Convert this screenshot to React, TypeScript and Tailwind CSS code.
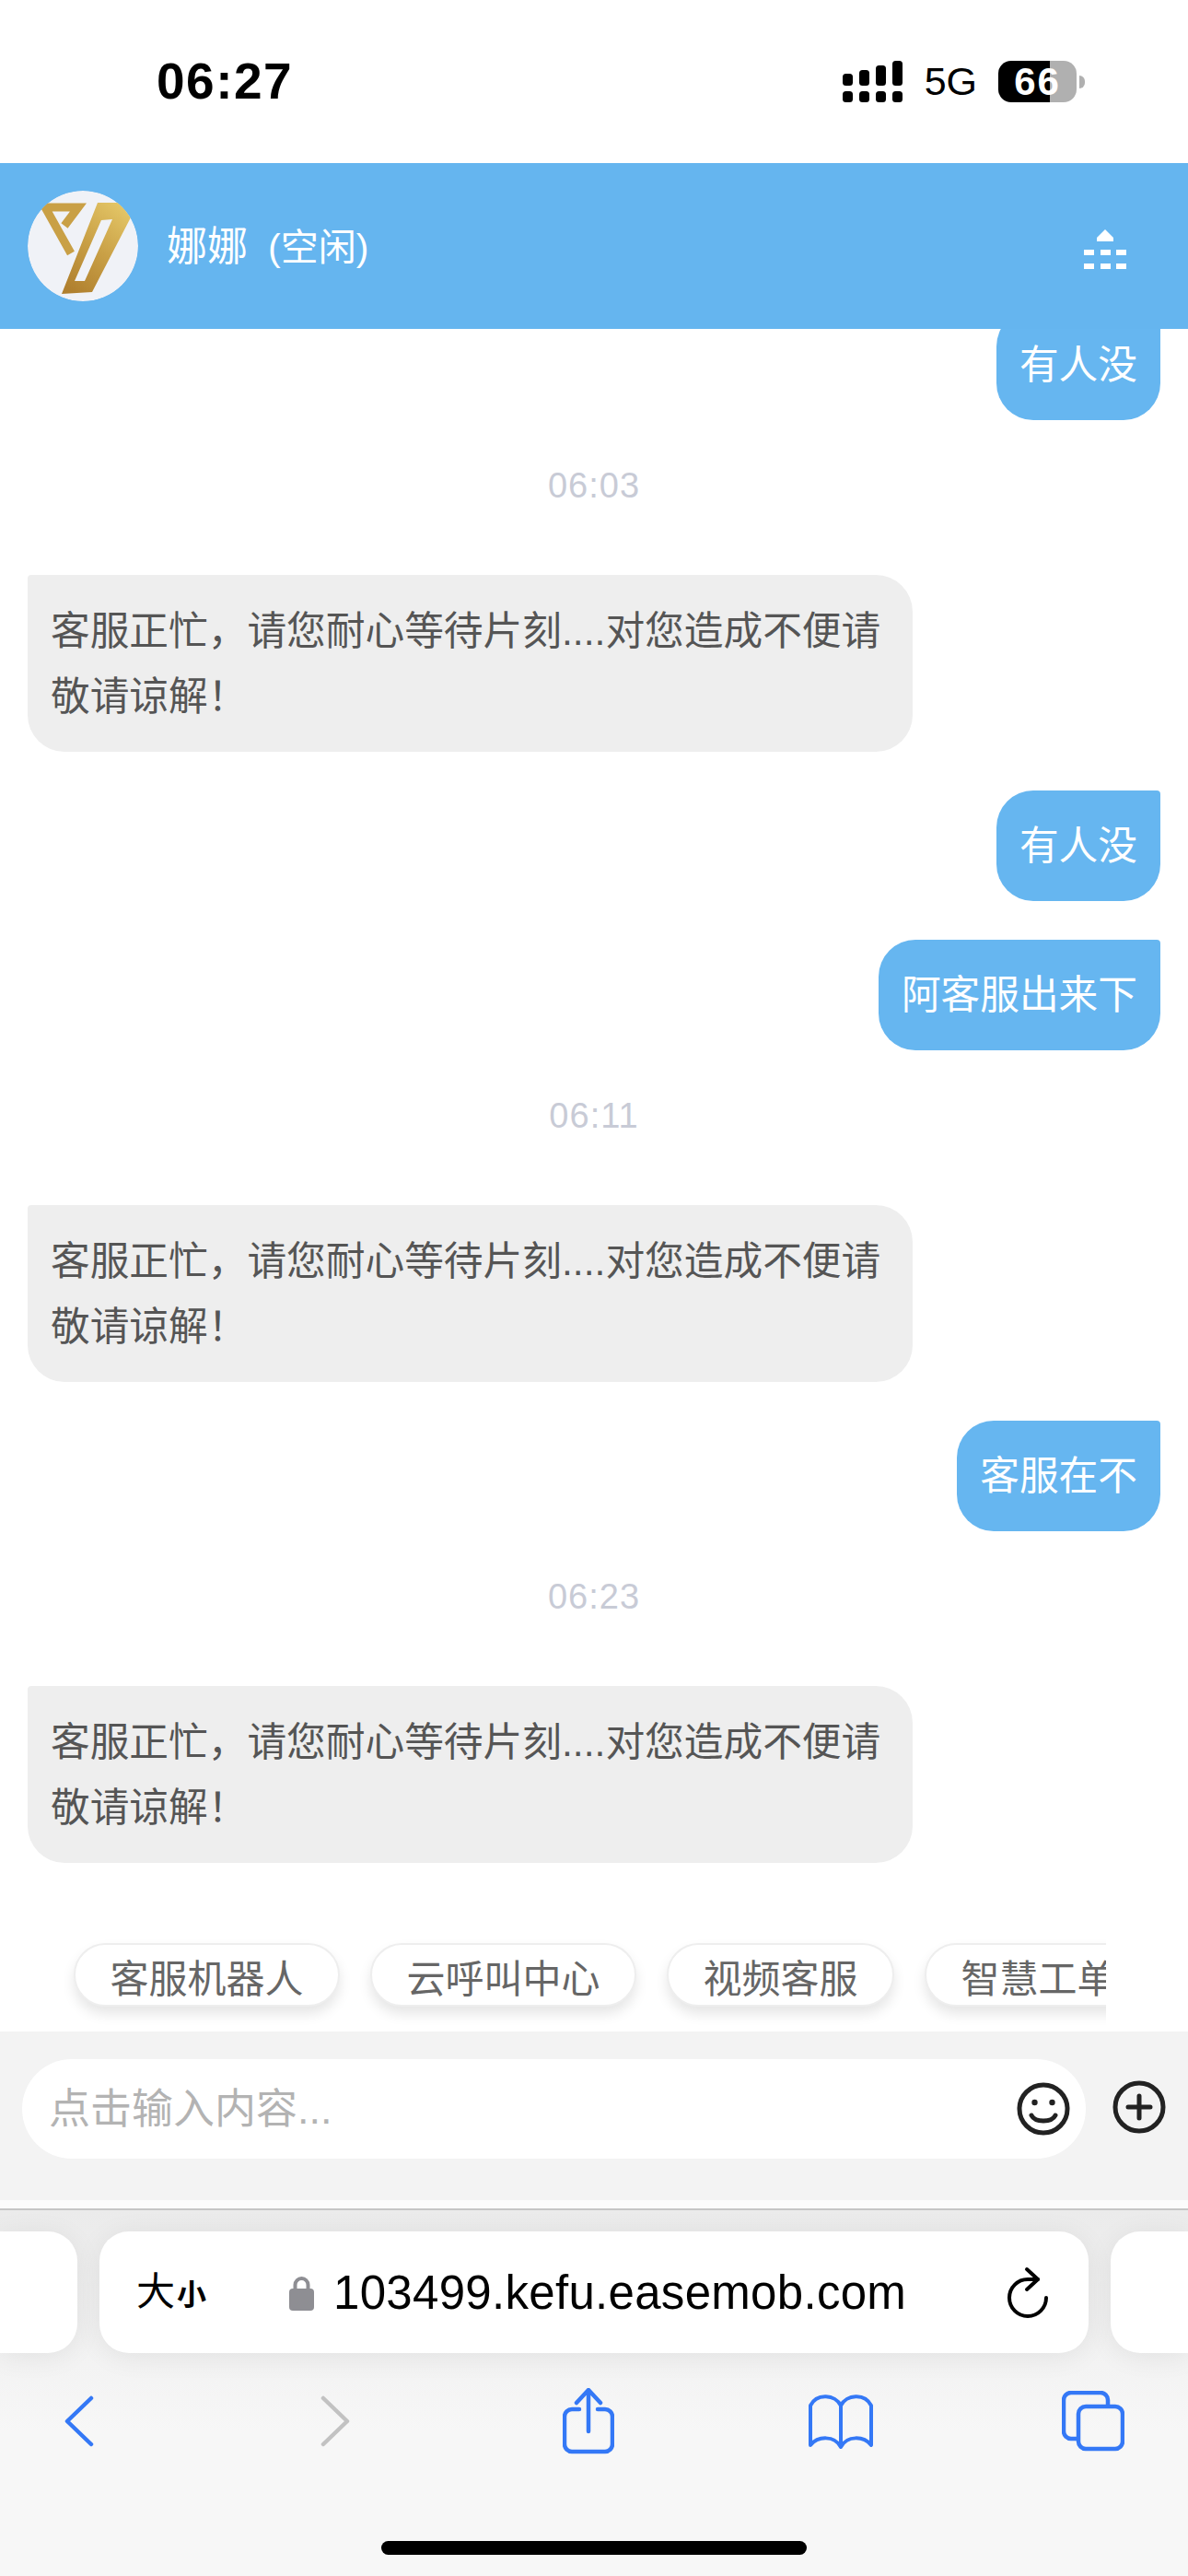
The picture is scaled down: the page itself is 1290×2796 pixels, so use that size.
import React from 'react';

const FONT = 'font-["Liberation_Sans","Noto_Sans_CJK_SC",sans-serif]';

type Message =
  | { kind: 'time'; text: string }
  | { kind: 'busy' }
  | { kind: 'mine'; text: string };

const messages: Message[] = [
  { kind: 'mine', text: '有人没' },
  { kind: 'time', text: '06:03' },
  { kind: 'busy' },
  { kind: 'mine', text: '有人没' },
  { kind: 'mine', text: '阿客服出来下' },
  { kind: 'time', text: '06:11' },
  { kind: 'busy' },
  { kind: 'mine', text: '客服在不' },
  { kind: 'time', text: '06:23' },
  { kind: 'busy' },
];

const chips = ['客服机器人', '云呼叫中心', '视频客服', '智慧工单'];

function SignalIcon() {
  return (
    <svg width="65" height="45" viewBox="0 0 65 45" fill="#000">
      <rect x="0" y="14" width="11" height="13" rx="3.5" />
      <rect x="18" y="10" width="11" height="17" rx="3.5" />
      <rect x="36" y="5" width="11" height="22" rx="3.5" />
      <rect x="54" y="0" width="11" height="27" rx="3.5" />
      <rect x="0" y="33" width="11" height="12" rx="3.5" />
      <rect x="18" y="33" width="11" height="12" rx="3.5" />
      <rect x="36" y="33" width="11" height="12" rx="3.5" />
      <rect x="54" y="33" width="11" height="12" rx="3.5" />
    </svg>
  );
}

function StatusBar() {
  return (
    <div className="h-[177px] flex items-center pl-[170px] pr-[112px] bg-white">
      <span className="text-[55px] leading-none font-bold text-black tracking-[1.5px]">06:27</span>
      <div className="ml-auto flex items-center">
        <SignalIcon />
        <span className="ml-[24px] text-[43px] leading-none text-black">5G</span>
        <div className="ml-[23px] w-[85px] h-[45px] rounded-[14px] flex items-center justify-center bg-[linear-gradient(90deg,#000_66%,#b0b0b0_66%)]">
          <span className="text-[42px] leading-none font-bold text-white tracking-[2px]">66</span>
        </div>
        <div className="ml-[3px] w-[6px] h-[14px] rounded-r-full bg-[#b0b0b0]" />
      </div>
    </div>
  );
}

function LogoMark() {
  return (
    <svg width="120" height="120" viewBox="0 0 120 120" className="block">
      <defs>
        <linearGradient id="gold" x1="0.8" y1="0" x2="0.2" y2="1">
          <stop offset="0" stopColor="#e3c566" />
          <stop offset="0.5" stopColor="#c9a046" />
          <stop offset="1" stopColor="#b0802f" />
        </linearGradient>
      </defs>
      <circle cx="60" cy="60" r="60" fill="#f0f2f7" />
      <path
        d="M76 13 H100 L112 29 L70 110 L37 112 Z M80 32 L92 31 L62 98 L51 98 Z"
        fill="url(#gold)"
        fillRule="evenodd"
      />
      <polyline points="40,38 55,18 19,18 47,68" fill="none" stroke="#c9a046" strokeWidth="9" />
    </svg>
  );
}

function MenuIcon() {
  return (
    <svg width="46" height="43" viewBox="0 0 46 43" fill="#fff" className="mt-[6px]">
      <polygon points="23,0 32,9 32,13 14,13 14,9" />
      <rect x="0" y="22" width="11" height="6" />
      <rect x="18" y="22" width="11" height="6" />
      <rect x="35" y="22" width="11" height="6" />
      <rect x="0" y="37" width="11" height="6" />
      <rect x="18" y="37" width="11" height="6" />
      <rect x="35" y="37" width="11" height="6" />
    </svg>
  );
}

function Header() {
  return (
    <div className="h-[180px] flex items-center pl-[30px] pr-[67px] bg-[#65b5ef] relative z-10">
      <div className="w-[120px] h-[120px] rounded-full overflow-hidden">
        <LogoMark />
      </div>
      <div className="ml-[31px] pt-[2px] text-white leading-none">
        <span className="text-[44px]">娜娜</span>
        <span className="text-[41px] ml-[22px]">(空闲)</span>
      </div>
      <div className="ml-auto">
        <MenuIcon />
      </div>
    </div>
  );
}

function BusyBubble() {
  return (
    <div className="w-[961px] pl-[25px] pr-[25px] pt-[26px] pb-[24px] self-start rounded-[40px] rounded-tl-[4px] bg-[#eeeeee] text-[42.7px] leading-[71px] text-[#555555]">
      客服正忙，请您耐心等待片刻....对您造成不便请敬请谅解！
    </div>
  );
}

function MessageList() {
  return (
    <div className="flex-1 min-h-0 flex flex-col gap-[42px] pl-[30px] pr-[30px] -mt-[21px]">
      {messages.map((m, i) => {
        if (m.kind === 'time') {
          return (
            <div key={i} className="h-[56px] mb-[28px] pt-[3px] flex items-center justify-center text-[38px] tracking-[1px] text-[#c8cbd6]">
              {m.text}
            </div>
          );
        }
        if (m.kind === 'busy') return <BusyBubble key={i} />;
        return (
          <div key={i} className="h-[120px] px-[25px] pt-[1px] self-end flex items-center rounded-[40px] rounded-tr-[4px] bg-[#66b6f0] text-[42.7px] text-white">
            {m.text}
          </div>
        );
      })}
    </div>
  );
}

function ChipRow() {
  return (
    <div className="ml-[60px] w-[1141px] h-[115px] pl-[20px] pt-[19px] flex gap-[33px] overflow-hidden">
      {chips.map(c => (
        <div
          key={c}
          className="h-[69px] flex-none pl-[37.5px] pr-[37.5px] pt-[10px] flex items-center rounded-full bg-white border-2 border-[#eeeeee] text-[42px] text-[#666666] shadow-[0_8px_14px_rgba(0,0,0,0.1)]"
        >
          {c}
        </div>
      ))}
    </div>
  );
}

function SmileIcon() {
  return (
    <svg width="58" height="58" viewBox="0 0 58 58" fill="none" stroke="#222" strokeWidth="5" strokeLinecap="round">
      <circle cx="29" cy="29" r="26" />
      <circle cx="19.5" cy="22" r="3.2" fill="#222" stroke="none" />
      <circle cx="38.5" cy="22" r="3.2" fill="#222" stroke="none" />
      <path d="M16 36 C20 44 38 44 42 36" />
    </svg>
  );
}

function PlusIcon() {
  return (
    <svg width="58" height="58" viewBox="0 0 58 58" fill="none" stroke="#222" strokeWidth="5" strokeLinecap="round">
      <circle cx="29" cy="29" r="26" />
      <path d="M29 17 V41 M17 29 H41" />
    </svg>
  );
}

function InputBar() {
  return (
    <div className="h-[183px] pt-[30px] pl-[24px] flex items-start bg-[#f3f3f3]">
      <div className="w-[1155px] h-[108px] pl-[29px] pr-[17px] flex items-center rounded-full bg-white">
        <span className="pt-[2px] text-[45px] text-[#b3b3b3]">点击输入内容...</span>
        <div className="ml-auto">
          <SmileIcon />
        </div>
      </div>
      <div className="ml-[29px] mt-[23px]">
        <PlusIcon />
      </div>
    </div>
  );
}

function LockIcon() {
  return (
    <svg width="27" height="39" viewBox="0 0 27 39" className="mr-[21px] flex-none">
      <path d="M6.5 18 V11 a7 7 0 0 1 14 0 V18" fill="none" stroke="#8e8e93" strokeWidth="4" />
      <rect x="0" y="15" width="27" height="24" rx="4" fill="#8e8e93" />
    </svg>
  );
}

function ReloadIcon() {
  return (
    <svg width="48" height="56" viewBox="0 0 48 56" fill="none" stroke="#000" strokeWidth="4" strokeLinecap="round" strokeLinejoin="round">
      <path d="M44 34 A20 20 0 1 1 24 14 H35" />
      <path d="M23 3 L35 14 L23 25" />
    </svg>
  );
}

function UrlRow() {
  return (
    <div className="pt-[23px] flex">
      <div className="w-[84px] h-[132px] rounded-r-[32px] bg-white shadow-[0_4px_30px_rgba(0,0,0,0.07)]" />
      <div className="ml-[24px] w-[1074px] h-[132px] pl-[40px] pr-[42px] flex items-center rounded-[32px] bg-white shadow-[0_4px_30px_rgba(0,0,0,0.07)]">
        <div className="w-[166px] flex-none text-black leading-none">
          <span className="text-[42px]">大</span>
          <span className="text-[32px] font-bold ml-[2px]">小</span>
        </div>
        <LockIcon />
        <span className="text-[51px] leading-none text-black tracking-[0.3px]">103499.kefu.easemob.com</span>
        <div className="ml-auto">
          <ReloadIcon />
        </div>
      </div>
      <div className="ml-[24px] flex-1 h-[132px] rounded-l-[32px] bg-white shadow-[0_4px_30px_rgba(0,0,0,0.07)]" />
    </div>
  );
}

const BLUE = '#3478f6';

function Toolbar() {
  return (
    <div className="mt-[36px] h-[76px] pl-[41px] flex items-center">
      <div className="w-[90px] flex justify-center">
        <svg width="32" height="56" viewBox="0 0 32 56" fill="none" stroke={BLUE} strokeWidth="4.5" strokeLinecap="round" strokeLinejoin="round">
          <path d="M29 3 L3 28 L29 53" />
        </svg>
      </div>
      <div className="ml-[188px] w-[90px] flex justify-center">
        <svg width="32" height="56" viewBox="0 0 32 56" fill="none" stroke="#c2c2c2" strokeWidth="4.5" strokeLinecap="round" strokeLinejoin="round">
          <path d="M3 3 L29 28 L3 53" />
        </svg>
      </div>
      <div className="ml-[185px] w-[90px] flex justify-center">
        <svg width="56" height="72" viewBox="0 0 56 72" fill="none" stroke={BLUE} strokeWidth="4.5" strokeLinecap="round" strokeLinejoin="round">
          <path d="M18 23 H10 a8 8 0 0 0 -8 8 V61 a8 8 0 0 0 8 8 H46 a8 8 0 0 0 8 -8 V31 a8 8 0 0 0 -8 -8 H38" />
          <path d="M28 47 V3 M15 16 L28 2 L41 16" />
        </svg>
      </div>
      <div className="ml-[184px] w-[90px] flex justify-center">
        <svg width="70" height="60" viewBox="0 0 70 60" fill="none" stroke={BLUE} strokeWidth="4" strokeLinecap="round" strokeLinejoin="round">
          <path d="M35 13 C29 1 9 -1 2 13 V56 C10 46 28 45 35 58 C42 45 60 46 68 56 V13 C61 -1 41 1 35 13 V58" />
        </svg>
      </div>
      <div className="ml-[184px] w-[90px] flex justify-center">
        <svg width="68" height="66" viewBox="0 0 68 66" fill="none" stroke={BLUE} strokeWidth="4.5" strokeLinecap="round" strokeLinejoin="round">
          <path d="M17 52 H10 a8 8 0 0 1 -8 -8 V10 a8 8 0 0 1 8 -8 H42 a8 8 0 0 1 8 8 V16" />
          <rect x="18" y="17" width="48" height="46" rx="8" />
        </svg>
      </div>
    </div>
  );
}

function SafariBar() {
  return (
    <div className="flex-1 flex flex-col border-t-2 border-[#c6c6c6] bg-[linear-gradient(180deg,#ebebeb_0px,#f1f1f1_130px,#f7f7f7_240px,#f7f7f7_100%)]">
      <UrlRow />
      <Toolbar />
      <div className="mt-[92px] mx-auto w-[462px] h-[15px] rounded-full bg-black" />
    </div>
  );
}

export default function App() {
  return (
    <div className={`w-[1290px] h-[2796px] flex flex-col overflow-hidden bg-white ${FONT}`}>
      <StatusBar />
      <Header />
      <div className="h-[1848px] flex flex-col overflow-hidden">
        <MessageList />
        <ChipRow />
      </div>
      <InputBar />
      <div className="h-[9px] bg-[#fcfcfc]" />
      <SafariBar />
    </div>
  );
}
